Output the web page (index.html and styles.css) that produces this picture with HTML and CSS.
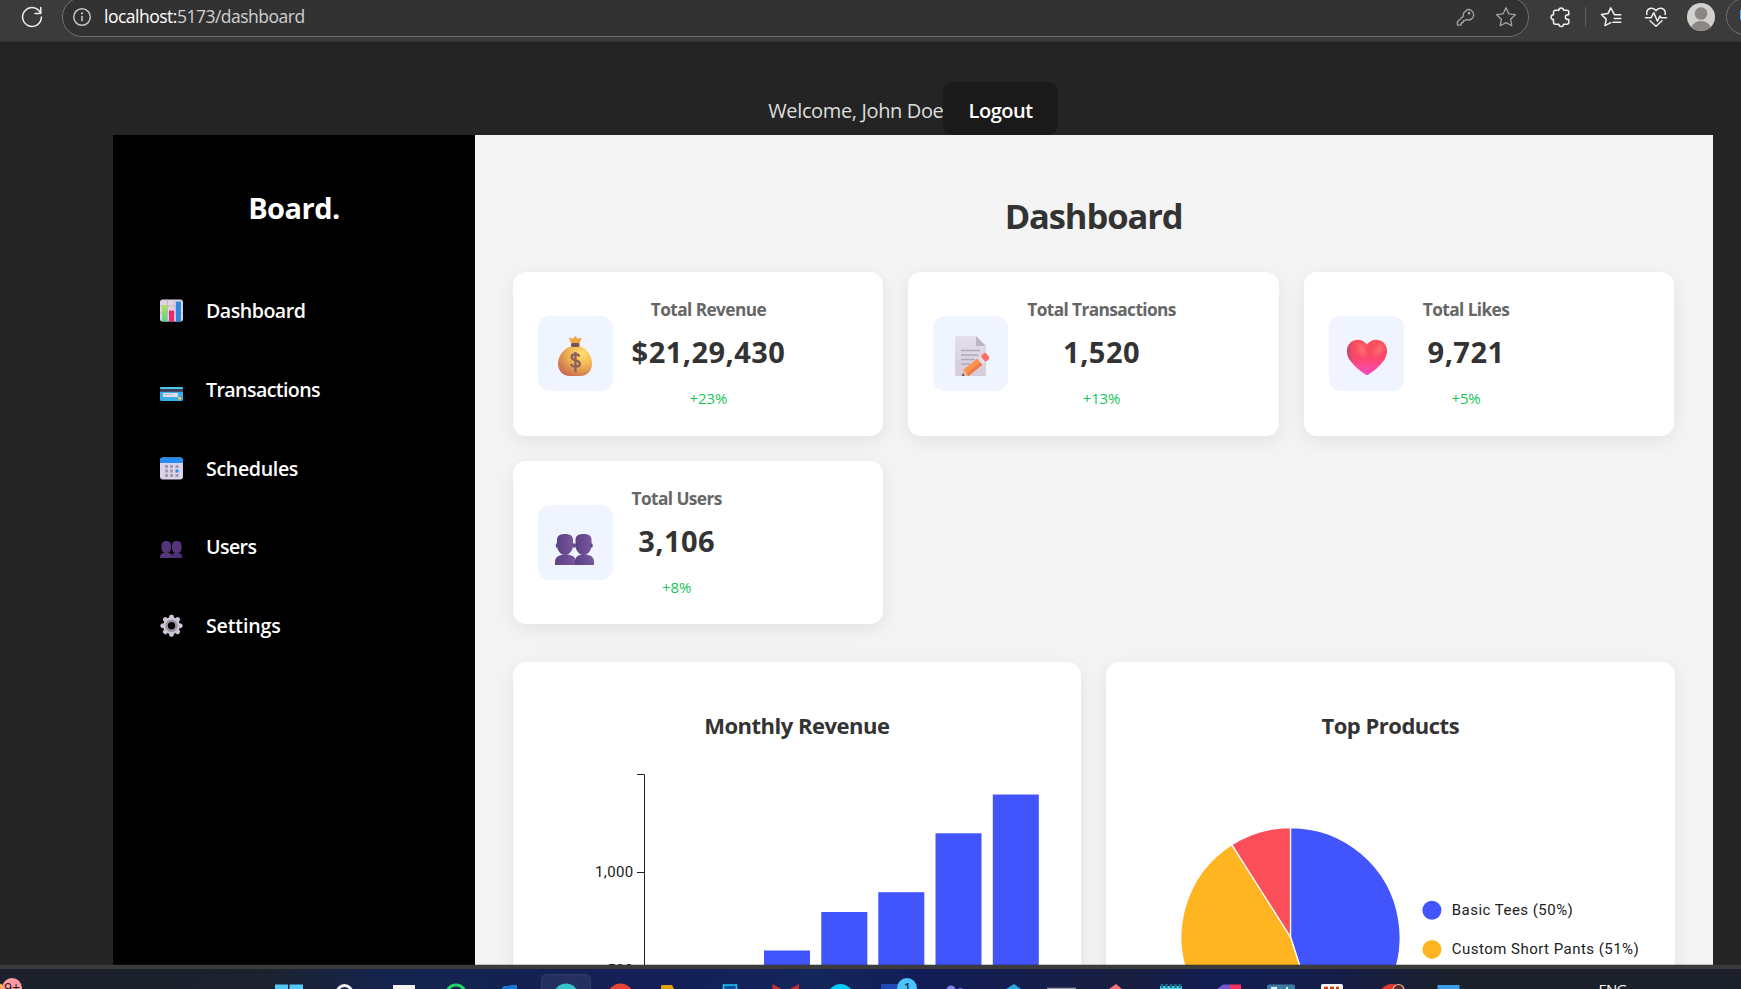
FILE: index.html
```html
<!DOCTYPE html>
<html lang="en">
<head>
<meta charset="utf-8">
<title>Dashboard</title>
<link rel="stylesheet" href="styles.css">
</head>
<body>
<header class="browser">
  <svg class="ico reload" width="24" height="24" viewBox="0 0 24 24"><path d="M20.6 8.2A9.4 9.4 0 1 0 21.4 12M20.8 2.6v5.8h-5.8"/></svg>
  <div class="omnibox">
    <svg class="ico info" width="20" height="20" viewBox="0 0 20 20"><circle cx="10" cy="10" r="8.3"/><path d="M10 9.5v4.200" stroke-width="1.600"/><circle cx="10" cy="6.300" r="1.100" fill="#c4c4c4" stroke="none"/></svg>
    <div class="url"><b>localhost:</b>5173/dashboard</div>
    <svg class="ico dim key" width="20" height="20" viewBox="0 0 20 20"><path d="M11.6 2.9a5.2 5.2 0 1 1-.3 9.6l-1.2 1.2H8.2v1.9H6.3v1.8l-.8.7H2.4v-3.2l5.900-5.900a5.200 5.200 0 0 1 3.300-5.400z"/><circle cx="14" cy="6.2" r=".7"/></svg>
    <svg class="ico dim" width="22" height="22" viewBox="0 0 22 22"><path d="M11 1.8l2.8 6 6.6.9-4.8 4.5 1.2 6.6-5.8-3.2-5.8 3.2 1.2-6.6L1.6 8.700l6.600-.9z"/></svg>
  </div>
  <svg class="ico puzzle" width="22" height="22" viewBox="0 0 22 22"><path d="M5.500 4.200h3.400a2.300 2.300 0 0 1 4.600 0h3.300a2 2 0 0 1 2 2v2.600h-1a2.400 2.400 0 0 0 0 4.800h1v2.600a2 2 0 0 1-2 2h-3.300a2.300 2.300 0 0 1-4.600 0H5.500a2 2 0 0 1-2-2v-2.600a2.400 2.400 0 0 1 0-4.800V6.200a2 2 0 0 1 2-2z"/></svg>
  <span class="divider"></span>
  <svg class="ico favs" width="22" height="22" viewBox="0 0 22 22"><path d="M20.800 8.800h-6.200L10.700 1.800 7.900 7.600l-6.500.9 4.800 4.600-1.200 6.500 5.800-3M14.200 12.500h6.600M13 16.200h7.800"/></svg>
  <svg class="ico health" width="24" height="24" viewBox="0 0 24 24"><path d="M2.800 9.500C1.900 3.200 8.800 1.200 12 5.700c3.200-4.500 10.100-2.500 9.200 3.800M1.500 12.700h5.700l2.600-5 3.700 8.600 2.400-5.300 1 1.700h5.600M6 15.800l6 5.400 6-5.400"/></svg>
  <svg class="avatar" width="28" height="28" viewBox="0 0 28 28"><clipPath id="av"><circle cx="14" cy="14" r="14"/></clipPath><g clip-path="url(#av)"><rect width="28" height="28" fill="#d2d0cd"/><circle cx="14" cy="10.500" r="6.300" fill="#8b8784"/><circle cx="14" cy="29" r="11" fill="#8b8784"/></g></svg>
  <div class="update">Update</div>
</header>

<div class="viewport">
  <div class="topbar"><span class="welcome">Welcome, John Doe</span><button class="logout">Logout</button></div>
  <div class="layout">
    <aside class="sidebar">
      <h2 class="brand">Board.</h2>
      <nav class="menu">
        <a class="item i1"><svg width="24" height="24" viewBox="0 0 24 24"><rect y="1.500" width="23" height="22" rx="2.500" fill="#dcd4e4"/><path d="M0 8h23M0 15h23M7.500 1.500v22M15 1.500v22" stroke="#c0b8ca" fill="none"/><rect x="2" y="7" width="5" height="16.500" fill="url(#g)"/><rect x="9" y="12.500" width="5" height="11" fill="#e92a72"/><rect x="16" y="3.500" width="5" height="20" fill="#2b8ae0"/></svg><span>Dashboard</span></a>
        <a class="item i2"><svg width="24" height="24" viewBox="0 0 24 24"><rect y="10" width="23" height="14" rx="1.500" fill="#3aaee8"/><path d="M0 12v-.5A1.500 1.500 0 0 1 1.500 10h20a1.500 1.500 0 0 1 1.500 1.500v.5z" fill="#4cc8f0"/><rect y="12" width="23" height="2.800" fill="#3f3a55"/><rect x="3" y="16" width="15" height="4" rx="1" fill="#e3dfe8"/><path d="M4 17.500h9" stroke="#bdb6c4"/><rect x="18" y="20" width="3" height="2.500" fill="#f5c43c"/></svg><span>Transactions</span></a>
        <a class="item i3"><svg width="24" height="24" viewBox="0 0 24 24"><rect y="1.500" width="23" height="22" rx="3" fill="#ddd3e9"/><path d="M0 7V4.500a3 3 0 0 1 3-3h17a3 3 0 0 1 3 3V7z" fill="#268df4"/><g fill="#a59bb0"><path d="M5 9h3v3H5zM10 9h3v3h-3zM15.500 9h3v3h-3zM5 13.500h3v3H5zM10 13.500h3v3h-3zM5 18h3v3H5zM10 18h3v3h-3zM15.500 18h3v3h-3z"/></g><path d="M15.500 13.500h3v3h-3z" fill="#1990f5"/></svg><span>Schedules</span></a>
        <a class="item i4"><svg width="24" height="24" viewBox="0 0 24 24"><g fill="#54357c"><rect x="1.500" y="7" width="9.500" height="12" rx="4.200"/><rect x="12" y="7" width="9.500" height="12" rx="4.200"/><path d="M0 24.500v-2c0-2 1.500-3.800 5-3.800h2.500c3 0 4.500 1.500 4.500 3.800v2z"/><path d="M11.500 24.500v-2c0-2 1.500-3.800 4.500-3.800h2c2.500 0 4 1.500 4 3.800v2z" fill="#4b2e73"/></g></svg><span>Users</span></a>
        <a class="item i5"><svg width="24" height="24" viewBox="0 0 24 24"><g transform="translate(11.500 12.700)"><g fill="#cfc5d8"><circle r="8.500"/><g id="t"><rect x="-2.300" y="-11" width="4.600" height="22" rx="1.800"/><rect x="-11" y="-2.300" width="22" height="4.600" rx="1.800"/></g><use href="#t" transform="rotate(45)"/></g><circle r="5" fill="none" stroke="#9b92a6" stroke-width="2.600"/><circle r="3.700" fill="#000"/></g></svg><span>Settings</span></a>
      </nav>
    </aside>

    <main class="main">
      <h1 class="title">Dashboard</h1>
      <section class="cards">
        <article class="card">
          <svg class="tile" width="75" height="75" viewBox="0 0 75 75"><defs>
            <linearGradient id="g" x2="0" y2="1"><stop stop-color="#b5e04f"/><stop offset="1" stop-color="#4fd58a"/></linearGradient>
            <radialGradient id="bag" cx=".72" cy=".25" r=".85"><stop stop-color="#ffe06e"/><stop offset=".5" stop-color="#f0b352"/><stop offset="1" stop-color="#c96a50"/></radialGradient></defs>
            <path d="M31 21.500l4 1.300L37.300 20l2.400 2.800 4-1.300-2.400 6.500h-8z" fill="#f0a640"/><path d="M34 30h7c8 2 13 10 13 17.500C54 55 49 60 42.500 60h-11C25 60 20 55 20 47.500 20 40 26 32 34 30z" fill="url(#bag)"/><rect x="33" y="27" width="8.500" height="4" rx="1.500" fill="#7d5550"/><path d="M41.200 40.500c-1-3.200-7.600-3-7.600.4 0 4.600 8.200 2.200 8.200 6.900 0 3.700-7.600 4-8.800.2M37.400 36v20" fill="none" stroke="#8f6260" stroke-width="2.400"/></svg>
          <div class="stat"><h3>Total Revenue</h3><p class="value">$21,29,430</p><span class="change">+23%</span></div>
        </article>
        <article class="card">
          <svg class="tile" width="75" height="75" viewBox="0 0 75 75"><defs><linearGradient id="pap" x2="0" y2="1"><stop stop-color="#e4dfec"/><stop offset="1" stop-color="#d5cbda"/></linearGradient></defs><path d="M24 20h19l10 10v28a2 2 0 0 1-2 2H24a2 2 0 0 1-2-2V22a2 2 0 0 1 2-2z" fill="url(#pap)"/><path d="M43 20l10 10H43z" fill="#bdb5c6"/><path d="M28 34.500h19M28 39h17M28 43.500h14M28 48h9" stroke="#b0a8b8" stroke-width="1.600"/><g transform="translate(29 60) rotate(-39)"><path d="M0 0l5.500-4v8z" fill="#e6b99b"/><path d="M0 0l2.200-1.600v3.200z" fill="#5a3a55"/><rect x="5" y="-4" width="18" height="8" fill="#fb9350"/><rect x="5" y="1" width="18" height="3" fill="#f07a4c"/><rect x="23" y="-4" width="4" height="8" fill="#e3dced"/><rect x="27" y="-4" width="6" height="8" rx="2" fill="#ff6d64"/></g></svg>
          <div class="stat"><h3>Total Transactions</h3><p class="value">1,520</p><span class="change">+13%</span></div>
        </article>
        <article class="card">
          <svg class="tile" width="75" height="75" viewBox="0 0 75 75"><defs><linearGradient id="hrt" x2="0" y2="1"><stop stop-color="#f5525a"/><stop offset=".5" stop-color="#fb4668"/><stop offset="1" stop-color="#f74cc0"/></linearGradient><radialGradient id="hl"><stop stop-color="#ff7a75" stop-opacity=".75"/><stop offset="1" stop-color="#ff7a75" stop-opacity="0"/></radialGradient><linearGradient id="hs"><stop stop-color="#a3457e" stop-opacity=".6"/><stop offset=".35" stop-color="#a3457e" stop-opacity="0"/></linearGradient></defs><path d="M38 28.500C34 22.500 26 22.500 21.500 26.500c-5 5-4.500 12.500 0 18.500C26 51 32 55.500 36.500 58.500q1.500 1 3 0C44 55.500 50 51 54.500 45c4.500-6 5-13.500 0-18.500C50 22.500 42 22.500 38 28.500z" fill="url(#hrt)"/><path d="M38 28.500C34 22.500 26 22.500 21.500 26.500c-5 5-4.500 12.500 0 18.500C26 51 32 55.500 38 59z" fill="url(#hs)"/><ellipse cx="33" cy="34" rx="6" ry="10" transform="rotate(-20 33 34)" fill="url(#hl)"/><ellipse cx="50" cy="34" rx="6" ry="10" transform="rotate(35 50 34)" fill="url(#hl)"/></svg>
          <div class="stat"><h3>Total Likes</h3><p class="value">9,721</p><span class="change">+5%</span></div>
        </article>
        <article class="card">
          <svg class="tile" width="75" height="75" viewBox="0 0 75 75"><defs><linearGradient id="hd"><stop stop-color="#5a4283"/><stop offset="1" stop-color="#7a559f"/></linearGradient></defs><g fill="url(#hd)"><path d="M17 60v-3c0-5 4-7 9-7.500h3c5 .5 9 2.500 9 7.500v3z"/><path d="M37 60v-3c0-5 3-7 7.500-7.500h3c5 .5 8.500 2.500 8.500 7.500v3z"/><path d="M27 29c5.500 0 8 2 8 6v5c0 5.500-3.500 10-8 10s-8-4.500-8-10v-5c0-4 2.500-6 8-6z"/><path d="M45.500 29c5.500 0 8 2 8 6v5c0 5.500-3.500 10-8 10s-8-4.500-8-10v-5c0-4 2.500-6 8-6z"/></g><g fill="#634887"><ellipse cx="19" cy="40.500" rx="1.300" ry="2.300"/><ellipse cx="36.200" cy="40.500" rx="1.800" ry="2.300"/><ellipse cx="53.500" cy="40.500" rx="1.300" ry="2.300"/></g></svg>
          <div class="stat"><h3>Total Users</h3><p class="value">3,106</p><span class="change">+8%</span></div>
        </article>
      </section>

      <section class="panels">
        <article class="panel">
          <h2>Monthly Revenue</h2>
          <svg class="chart" width="568" height="400" viewBox="513 740 568 400">
            <path d="M637 774.500h7.500V1090M637 872.500h7.500M637 970.500h7.500" fill="none" stroke="#212121"/>
            <text x="633.500" y="877" text-anchor="end">1,000</text><text x="633.500" y="975" text-anchor="end">500</text>
            <g fill="#4254fb"><rect x="764" y="950.500" width="46" height="120"/><rect x="821.300" y="912" width="46" height="160"/><rect x="878.300" y="892.200" width="46" height="180"/><rect x="935.500" y="833.300" width="46" height="240"/><rect x="992.800" y="794.500" width="46" height="280"/></g>
          </svg>
        </article>
        <article class="panel">
          <h2>Top Products</h2>
          <svg class="chart" width="568" height="400" viewBox="1106.500 740 568 400">
            <g stroke="#fff" stroke-width="1.300" stroke-linejoin="round" transform="translate(1291 937)"><path d="M0 0V-109.500A109.500 109.500 0 0 1 33.500 104.300z" fill="#4254fb"/><path d="M0 0L33.500 104.300A109.500 109.500 0 0 1-58.700-92.400z" fill="#ffb422"/><path d="M0 0L-58.700-92.400A109.500 109.500 0 0 1 0-109.500z" fill="#fa4f58"/></g>
            <circle cx="1432.400" cy="910.300" r="9.500" fill="#4254fb"/><circle cx="1432.400" cy="949.400" r="9.500" fill="#ffb422"/><circle cx="1432.400" cy="988.500" r="9.500" fill="#fa4f58"/>
            <text class="legend" x="1452.300" y="915">Basic Tees (50%)</text><text class="legend" x="1452.300" y="954">Custom Short Pants (51%)</text>
          </svg>
        </article>
      </section>
    </main>
  </div>
</div>

<footer class="taskbar">
  <svg width="1741" height="20" viewBox="0 969 1741 20">
    <circle cx="-3" cy="992" r="9" fill="#f5b24a"/><circle cx="12" cy="988" r="10" fill="#ff9aa2"/><text x="4" y="993" font-size="14" fill="#1b1b1b">9+</text>
    <path d="M275 984.500h13V989h-13zM289.500 984.500h13.500V989h-13.500z" fill="#56c8f5"/>
    <circle cx="344.500" cy="993" r="7.500" fill="none" stroke="#f2f2f5" stroke-width="3"/>
    <path d="M393 985h22v4h-22z" fill="#f4f4f4"/>
    <circle cx="456" cy="994.500" r="9.500" fill="none" stroke="#25d366" stroke-width="3"/>
    <path d="M502 988l2-2h5l1-1h7v4h-15z" fill="#1976d2"/>
    <rect x="541.500" y="974.500" width="49" height="30" rx="5" fill="#25305e" stroke="#323c68"/>
    <circle cx="566" cy="996" r="12.500" fill="#36c6c8"/>
    <circle cx="620.500" cy="996.500" r="13" fill="#ea4335"/>
    <path d="M661 989v-3a1 1 0 0 1 1-1h10l2 4z" fill="#dfa30b"/>
    <path d="M723.500 989v-4h13v4" fill="#0c4f9c" stroke="#22c7f5" stroke-width="1.600"/>
    <path d="M772.500 984l9 5h-9zM799 984l-9 5h9z" fill="#c2302f"/>
    <circle cx="840.500" cy="997" r="10.500" fill="none" stroke="#00cdf7" stroke-width="5"/>
    <path d="M881 984h20v5h-20z" fill="#1f49b8"/><circle cx="907" cy="988" r="10" fill="#4cc2ff"/><text x="903.500" y="993" font-size="14" fill="#10181f">1</text>
    <circle cx="951" cy="990" r="4.500" fill="#7b83eb"/><circle cx="960.500" cy="990" r="2.500" fill="#5059c9"/>
    <path d="M1006 989l8-5 7 5z" fill="#29a5e3"/>
    <path d="M1047 988.300h29" stroke="#bcbcbc"/>
    <path d="M1109 989l7-5 6 5z" fill="#f47174"/>
    <path d="M1160 989v-3h22v3z" fill="#5cd0e8"/><path d="M1162 984v4M1166.500 984v4M1171 984v4M1175.500 984v4M1180 984v4" stroke="#0b7690" stroke-width="2.400"/>
    <path d="M1217 989l6-4.500h7v4.500z" fill="#7656c8"/><path d="M1230 984.500h11v4.500h-11z" fill="#f7305f"/>
    <rect x="1267" y="984.500" width="28" height="8" rx="2" fill="#3c7ca2"/><path d="M1271 988h6M1287 989v-2" stroke="#e0eef5" stroke-width="2"/>
    <rect x="1321" y="984" width="22" height="8" rx="1.500" fill="#f6f6f6"/><path d="M1324 988h4M1330 988h4M1336 988h3" stroke="#d83b01" stroke-width="2.500"/>
    <circle cx="1392" cy="997" r="13" fill="#e2382e"/><circle cx="1398.500" cy="990" r="5.500" fill="#5a2b28" stroke="#efb9a5" stroke-width="1.200"/>
    <path d="M1437.500 985h22v4h-22z" fill="#3b9fee"/>
    <text x="1598.500" y="995" font-size="15" fill="#fff" textLength="29">ENG</text>
  </svg>
</footer>
</body>
</html>
```
FILE: styles.css
```css
* { box-sizing: border-box; }
body, h1, h2, h3, p { margin: 0; }
body {
  height: 989px;
  overflow: hidden;
  display: flex;
  flex-direction: column;
  background: #242424;
  font-family: "Open Sans", "Noto Sans", sans-serif;
  white-space: nowrap;
}

.browser {
  height: 42px;
  flex: none;
  display: flex;
  align-items: center;
  padding: 0 0 8px 20px;
  background: #3b3b3b;
  border-bottom: 1px solid #333;
  overflow: hidden;
}
.ico { flex: none; fill: none; stroke: #f0f0f0; stroke-width: 1.5; stroke-linejoin: round; stroke-linecap: round; }
.ico.dim { stroke: #a3a3a3; stroke-width: 1.3; }
.ico.info { stroke: #c4c4c4; }
.omnibox {
  flex: none;
  width: 1467px;
  height: 40px;
  margin-left: 18px;
  padding: 0 11px 0 9px;
  display: flex;
  align-items: center;
  background: #323232;
  border: 1px solid #717171;
  border-radius: 20px;
}
.url { margin: -1px 0 0 12px; flex: 1; font-size: 17.5px; line-height: 24px; letter-spacing: -.5px; color: #d0d0d0; }
.url b { font-weight: 400; color: #fff; }
.key { margin-right: 20px; }
.puzzle { margin-left: 21px; }
.divider { flex: none; width: 1px; height: 20px; margin-left: 13px; background: #5e5e5e; }
.favs { margin-left: 14px; }
.health { margin-left: 22px; }
.avatar { flex: none; margin-left: 19px; }
.update {
  flex: none;
  width: 90px;
  height: 37px;
  margin-left: 11px;
  padding-left: 12px;
  border: 1px solid #717171;
  border-radius: 19px;
  font-size: 17px;
  line-height: 34px;
  color: #fff;
}

.viewport { height: 923px; flex: none; overflow: hidden; padding: 40px 28px 0 113px; }
.topbar { height: 53px; display: flex; justify-content: center; align-items: center; font-size: 20px; }
.welcome { padding-top: 3px; letter-spacing: -.36px; color: #dedede; }
.logout {
  height: 53px;
  padding: 3px 25px 0;
  border: 0;
  border-radius: 10px;
  background: #1a1a1a;
  color: #fff;
  font: 600 20px "Open Sans", sans-serif;
  letter-spacing: -.45px;
}
.layout { display: flex; height: 1100px; }

.sidebar { flex: none; width: 362px; padding: 53px 0 0 47px; background: #000; color: #fff; }
.brand { margin-right: 47px; font-size: 29px; line-height: 40px; letter-spacing: -.5px; text-align: center; }
.menu { margin-top: 43px; }
.item { display: flex; align-items: center; gap: 22px; height: 78.7px; font-size: 19.6px; font-weight: 600; }
.item span { padding-top: 1px; }
.i1 { letter-spacing: -.5px; }
.i2 { letter-spacing: -.6px; }
.i3 { letter-spacing: -.35px; }
.i4 { letter-spacing: -.6px; }
.i5 { letter-spacing: -.15px; }

.main { flex: 1; padding: 58px 38.5px 0 37.6px; background: #f4f4f4; color: #333; }
.title { margin-bottom: 34px; font-size: 34.5px; line-height: 45px; letter-spacing: -1.1px; text-align: center; }
.cards { display: grid; grid-template-columns: repeat(3, 1fr); grid-auto-rows: 163.5px; gap: 25px; }
.card, .panel { background: #fff; border-radius: 13px; box-shadow: 0 5px 19px rgba(0, 0, 0, .08); }
.card { display: flex; align-items: center; padding: 0 25px; gap: 19px; }
.tile { flex: none; border-radius: 12px; background: #eff4ff; }
.stat { display: flex; flex-direction: column; align-items: center; }
.stat h3 { font-size: 17.3px; line-height: 26px; font-weight: 700; letter-spacing: -.6px; color: #666; }
.value { margin-top: 9px; font-size: 29px; line-height: 40px; font-weight: 700; letter-spacing: .45px; }
.change { margin-top: 14px; font-size: 15px; line-height: 24px; font-weight: 500; letter-spacing: -.1px; color: #16c45a; }

.panels { display: grid; grid-template-columns: 1fr 1fr; gap: 25px; margin-top: 38px; }
.panel { height: 500px; padding-top: 48px; }
.panel h2 { font-size: 22px; line-height: 30px; letter-spacing: -.5px; text-align: center; }
.chart { display: block; font: 15px Roboto, sans-serif; fill: #212121; letter-spacing: .35px; }
.legend { letter-spacing: .47px; }

.taskbar {
  flex: none;
  height: 24px;
  border-top: 4px solid #3b3b3b;
  box-shadow: 0 -1px 0 rgba(40, 40, 40, .25);
  position: relative;
  background: linear-gradient(90deg, #1c212b 0, #1c222e 15%, #14244c 22%, #141f58 38%, #14265a 47%, #131d58 53%, #191f40 65%, #121d52 70%, #151d4a 76%, #1c212b 84%, #1c212b 100%);
}
.taskbar svg { display: block; }
```
